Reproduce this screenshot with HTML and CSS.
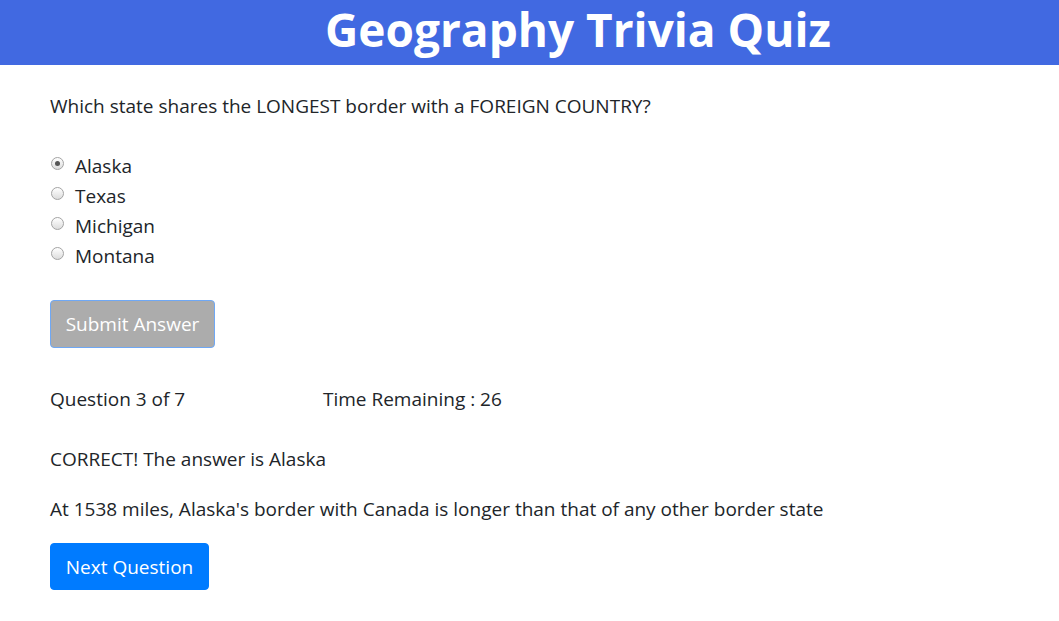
FILE: index.html
```html
<!DOCTYPE html>
<html>
<head>
<meta charset="utf-8">
<link rel="stylesheet" href="styles.css">
</head>
<body>
<header class="header">
  <h1 class="title">Geography Trivia Quiz</h1>
</header>
<main class="content">
  <p class="question">Which state shares the LONGEST border with a FOREIGN COUNTRY?</p>
  <div class="options">
    <label class="option"><input type="radio" name="ans" checked> Alaska</label>
    <label class="option"><input type="radio" name="ans"> Texas</label>
    <label class="option"><input type="radio" name="ans"> Michigan</label>
    <label class="option"><input type="radio" name="ans"> Montana</label>
  </div>
  <button class="btn btn-submit">Submit Answer</button>
  <div class="status">
    <span class="count">Question 3 of 7</span>
    <span class="timer">Time Remaining : 26</span>
  </div>
  <p class="result">CORRECT! The answer is Alaska</p>
  <p class="fact">At 1538 miles, Alaska's border with Canada is longer than that of any other border state</p>
  <button class="btn btn-next">Next Question</button>
</main>
</body>
</html>
```
FILE: styles.css
```css
body {
  margin: 0;
  font-family: "Open Sans", "Noto Sans", sans-serif;
  font-size: 19px;
  line-height: 30px;
  color: #212529;
  background: #fff;
}
.header {
  background: #4169e1;
  height: 65px;
  display: flex;
  align-items: flex-start;
  padding-left: 325px;
}
.title {
  margin: 0;
  color: #fff;
  font-size: 46px;
  font-weight: 700;
  line-height: 58px;
}
.content {
  padding: 26px 50px 0;
}
.question {
  margin: 0 0 30px;
}
.options {
  display: flex;
  flex-direction: column;
}
.option {
  display: flex;
  align-items: center;
  gap: 11px;
  height: 30px;
}
.option input {
  appearance: none;
  -webkit-appearance: none;
  margin: 0 0 5px 1px;
  width: 13px;
  height: 13px;
  border-radius: 50%;
  border: 1px solid #a3a3a3;
  background: linear-gradient(#ffffff, #dcdcdc);
  display: grid;
  place-items: center;
  flex-shrink: 0;
}
.option input:checked::after {
  content: "";
  width: 5px;
  height: 5px;
  border-radius: 50%;
  background: #555;
}
.btn {
  display: block;
  font-family: inherit;
  font-size: 19px;
  line-height: 30px;
  border-radius: 4px;
  color: #fff;
  cursor: pointer;
  padding: 0;
}
.btn-submit {
  margin-top: 29px;
  width: 165px;
  height: 48px;
  background: #acacac;
  border: 1px solid #6fa8f5;
}
.btn-next {
  width: 159px;
  height: 47px;
  background: #007bff;
  border: 1px solid #007bff;
}
.status {
  display: flex;
  margin-top: 36px;
}
.count {
  width: 273px;
}
.result {
  margin: 30px 0 0;
}
.fact {
  margin: 20px 0 19px;
}
```
